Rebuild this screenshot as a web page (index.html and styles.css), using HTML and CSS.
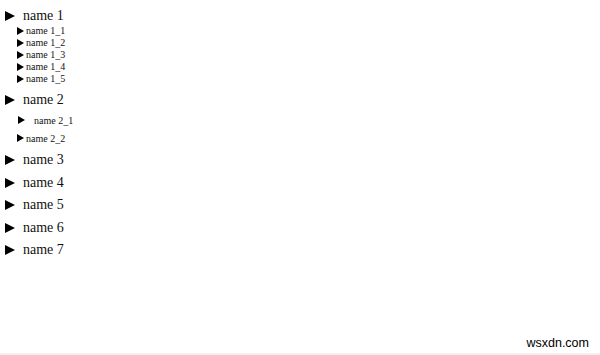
FILE: index.html
```html
<!DOCTYPE html>
<html lang="en">
<head>
  <meta charset="UTF-8">
  <title>Tree</title>
  <link rel="stylesheet" href="styles.css">
</head>
<body>
  <ul class="tree">
    <li>
      <div class="node"><span class="arrow"></span>name 1</div>
      <ul class="children">
        <li class="child"><span class="arrow small"></span>name 1_1</li>
        <li class="child"><span class="arrow small"></span>name 1_2</li>
        <li class="child"><span class="arrow small"></span>name 1_3</li>
        <li class="child"><span class="arrow small"></span>name 1_4</li>
        <li class="child"><span class="arrow small"></span>name 1_5</li>
      </ul>
    </li>
    <li class="second">
      <div class="node"><span class="arrow"></span>name 2</div>
      <ul class="children tall">
        <li class="child wide"><span class="arrow small"></span>name 2_1</li>
        <li class="child"><span class="arrow small"></span>name 2_2</li>
      </ul>
    </li>
    <li><div class="node"><span class="arrow"></span>name 3</div></li>
    <li><div class="node"><span class="arrow"></span>name 4</div></li>
    <li><div class="node"><span class="arrow"></span>name 5</div></li>
    <li><div class="node"><span class="arrow"></span>name 6</div></li>
    <li><div class="node"><span class="arrow"></span>name 7</div></li>
  </ul>
  <div class="mark">wsxdn.com</div>
</body>
</html>
```

FILE: styles.css
```css
* {
  margin: 0;
  padding: 0;
  box-sizing: border-box;
}

body {
  font-family: "Liberation Serif", serif;
  color: #111;
  background: #fff;
  height: 355px;
  border-bottom: 2px solid #f0f0f0;
  position: relative;
  padding-top: 5px;
}

ul {
  list-style: none;
}

.node {
  display: flex;
  align-items: center;
  height: 22.5px;
  padding-left: 5px;
  font-size: 14px;
}

.arrow {
  display: inline-block;
  width: 0;
  height: 0;
  border-left: 10px solid #000;
  border-top: 5px solid transparent;
  border-bottom: 5px solid transparent;
  margin-right: 8px;
}

.arrow.small {
  border-left-width: 7px;
  border-top-width: 4px;
  border-bottom-width: 4px;
  margin-right: 2px;
}

.children {
  margin-top: -3px;
  margin-bottom: 4px;
}

.child {
  display: flex;
  align-items: center;
  height: 12px;
  padding-left: 17px;
  font-size: 10px;
}

.children.tall {
  margin-top: 0;
  margin-bottom: 2px;
}

.tall .child {
  height: 18px;
}

.child.wide {
  padding-left: 18px;
}

.child.wide .arrow {
  margin-right: 9px;
}

.mark {
  position: absolute;
  right: 11px;
  bottom: 3px;
  font-family: "Liberation Sans", sans-serif;
  font-size: 12.5px;
  color: #000;
}
```
